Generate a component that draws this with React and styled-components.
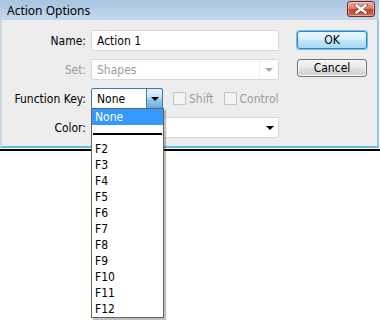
import React from "react";
import styled, { createGlobalStyle } from "styled-components";

const Global = createGlobalStyle`
  html, body { margin: 0; padding: 0; background: #ffffff; }
  body { width: 380px; height: 320px; overflow: hidden; font-family: "DejaVu Sans Condensed", "Liberation Sans", sans-serif; font-size: 12px; color: #000; }
`;

const Page = styled.div`
  display: flex;
  flex-direction: column;
  width: 380px;
`;

const Window = styled.div`
  width: 379px;
  box-sizing: border-box;
  border-left: 2px solid #c9d6e4;
  border-right: 2px solid #8fc3e6;
  border-bottom: 2px solid #5bc0e8;
  background: #ededed;
  display: flex;
  flex-direction: column;
`;

const TitleBar = styled.div`
  height: 20px;
  margin-left: -2px;
  margin-right: -2px;
  padding: 0 4px 0 7px;
  display: flex;
  align-items: center;
  justify-content: space-between;
  background: linear-gradient(#a9c4e0, #c3d8ee);
`;

const Title = styled.span`
  font-family: "Noto Sans", "Liberation Sans", sans-serif;
  font-size: 12px;
  color: #000;
  margin-top: 1px;
`;

const CloseButton = styled.div`
  width: 26px;
  height: 14px;
  margin-top: -2px;
  border: 1px solid #6e2a1f;
  border-radius: 3px;
  background: linear-gradient(#eab1a3 0%, #d8826e 45%, #c2452b 55%, #d06a4c 100%);
  display: flex;
  align-items: center;
  justify-content: center;
  box-shadow: inset 0 0 0 1px rgba(255, 220, 210, 0.5);
`;

const Body = styled.div`
  display: flex;
  padding: 10px 0 0 0;
  height: 126px;
  box-sizing: border-box;
`;

const Form = styled.div`
  display: grid;
  grid-template-columns: 84px 188px;
  column-gap: 5px;
  row-gap: 8px;
  grid-auto-rows: 21px;
  align-items: center;
`;

const Label = styled.span`
  text-align: right;
  color: ${(p) => (p.$disabled ? "#9c9c9c" : "#000")};
`;

const Field = styled.div`
  position: relative;
  box-sizing: border-box;
  height: 21px;
  width: ${(p) => p.$width || "188px"};
  border: 1px solid ${(p) => (p.$focus ? "#3d7bad" : "#d5d9de")};
  border-radius: 2px;
  background: #fff;
  display: flex;
  align-items: center;
  padding-left: 5px;
  color: ${(p) => (p.$disabled ? "#9c9c9c" : "#000")};
`;

const FieldText = styled.span`
  flex: 1;
`;

const Arrow = styled.span`
  width: 0;
  height: 0;
  border-left: 4px solid transparent;
  border-right: 4px solid transparent;
  border-top: 4px solid ${(p) => p.$color || "#000"};
  margin-right: ${(p) => p.$mr || "4px"};
`;

const DisabledDivider = styled.span`
  align-self: stretch;
  width: 1px;
  background: #eef0f2;
  margin-right: 5px;
`;

const ComboButton = styled.div`
  align-self: stretch;
  width: 15px;
  margin: -1px -1px -1px 0;
  border: 1px solid #3d7bad;
  border-radius: 0 2px 2px 0;
  background: linear-gradient(#e3f1fb 0%, #c4e3f7 45%, #98cbed 55%, #6aaede 100%);
  display: flex;
  align-items: center;
  justify-content: center;
`;

const KeyRow = styled.div`
  display: flex;
  align-items: center;
  width: 188px;
`;

const ComboWrap = styled.div`
  position: relative;
  margin-right: 10px;
`;

const CheckGroup = styled.label`
  display: flex;
  align-items: center;
  color: #9c9c9c;
  margin-right: ${(p) => p.$mr || "0"};
`;

const CheckBox = styled.span`
  width: 11px;
  height: 11px;
  border: 1px solid #c4c4c4;
  background: #f4f4f4;
  margin-right: 3px;
`;

const List = styled.div`
  position: absolute;
  top: 20px;
  left: 0;
  width: 73px;
  box-sizing: border-box;
  border: 1px solid #646464;
  background: #fff;
  box-shadow: 2px 2px 1px rgba(0, 0, 0, 0.25);
  z-index: 10;
  display: flex;
  flex-direction: column;
`;

const Item = styled.div`
  height: 16px;
  line-height: 16px;
  padding-left: 3px;
  background: ${(p) => (p.$selected ? "#3399ff" : "#fff")};
  color: ${(p) => (p.$selected ? "#fff" : "#000")};
`;

const Separator = styled.div`
  height: 16px;
  display: flex;
  align-items: center;
  padding: 0 1px;
  &::after {
    content: "";
    flex: 1;
    height: 2px;
    margin-top: 1px;
    background: #000;
  }
`;

const Buttons = styled.div`
  display: flex;
  flex-direction: column;
  gap: 10px;
  margin-left: 18px;
  margin-top: 1px;
`;

const Button = styled.button`
  width: 70px;
  height: 18px;
  padding: 0;
  box-sizing: border-box;
  font-family: inherit;
  font-size: 12px;
  color: #000;
  border-radius: 3px;
  border: 1px solid ${(p) => (p.$default ? "#3c7fb1" : "#707070")};
  background: ${(p) =>
    p.$default
      ? "linear-gradient(#eaf6fd 0%, #d9f0fc 45%, #bee6fd 55%, #a7d9f5 100%)"
      : "linear-gradient(#f2f2f2 0%, #ebebeb 45%, #dddddd 55%, #cfcfcf 100%)"};
  box-shadow: ${(p) => (p.$default ? "0 0 0 1px #5fc5f0" : "inset 0 0 0 1px #fcfcfc")};
`;

const BackLine = styled.div`
  height: 2px;
  margin-top: 1px;
  background: #000;
  width: 380px;
`;

const keys = ["F2", "F3", "F4", "F5", "F6", "F7", "F8", "F9", "F10", "F11", "F12"];

export default function App() {
  return (
    <Page>
      <Global />
      <Window>
        <TitleBar>
          <Title>Action Options</Title>
          <CloseButton>
            <svg width="14" height="10" viewBox="0 0 14 10">
              <path d="M2 1 L12 9 M12 1 L2 9" stroke="#5a2a20" strokeWidth="4" strokeLinecap="square" opacity="0.6" />
              <path d="M2.5 1.5 L11.5 8.5 M11.5 1.5 L2.5 8.5" stroke="#fff" strokeWidth="2.4" strokeLinecap="square" />
            </svg>
          </CloseButton>
        </TitleBar>
        <Body>
          <Form>
            <Label>Name:</Label>
            <Field>
              <FieldText>Action 1</FieldText>
            </Field>
            <Label $disabled>Set:</Label>
            <Field $disabled>
              <FieldText>Shapes</FieldText>
              <DisabledDivider />
              <Arrow $color="#a8a8a8" $mr="5px" />
            </Field>
            <Label>Function Key:</Label>
            <KeyRow>
              <ComboWrap>
                <Field $width="72px" $focus>
                  <FieldText>None</FieldText>
                  <ComboButton>
                    <Arrow $mr="0" />
                  </ComboButton>
                </Field>
                <List>
                  <Item $selected>None</Item>
                  <Separator />
                  {keys.map((k) => (
                    <Item key={k}>{k}</Item>
                  ))}
                </List>
              </ComboWrap>
              <CheckGroup $mr="10px">
                <CheckBox />
                Shift
              </CheckGroup>
              <CheckGroup>
                <CheckBox />
                Control
              </CheckGroup>
            </KeyRow>
            <Label>Color:</Label>
            <Field>
              <FieldText></FieldText>
              <Arrow />
            </Field>
          </Form>
          <Buttons>
            <Button $default>OK</Button>
            <Button>Cancel</Button>
          </Buttons>
        </Body>
      </Window>
      <BackLine />
    </Page>
  );
}
